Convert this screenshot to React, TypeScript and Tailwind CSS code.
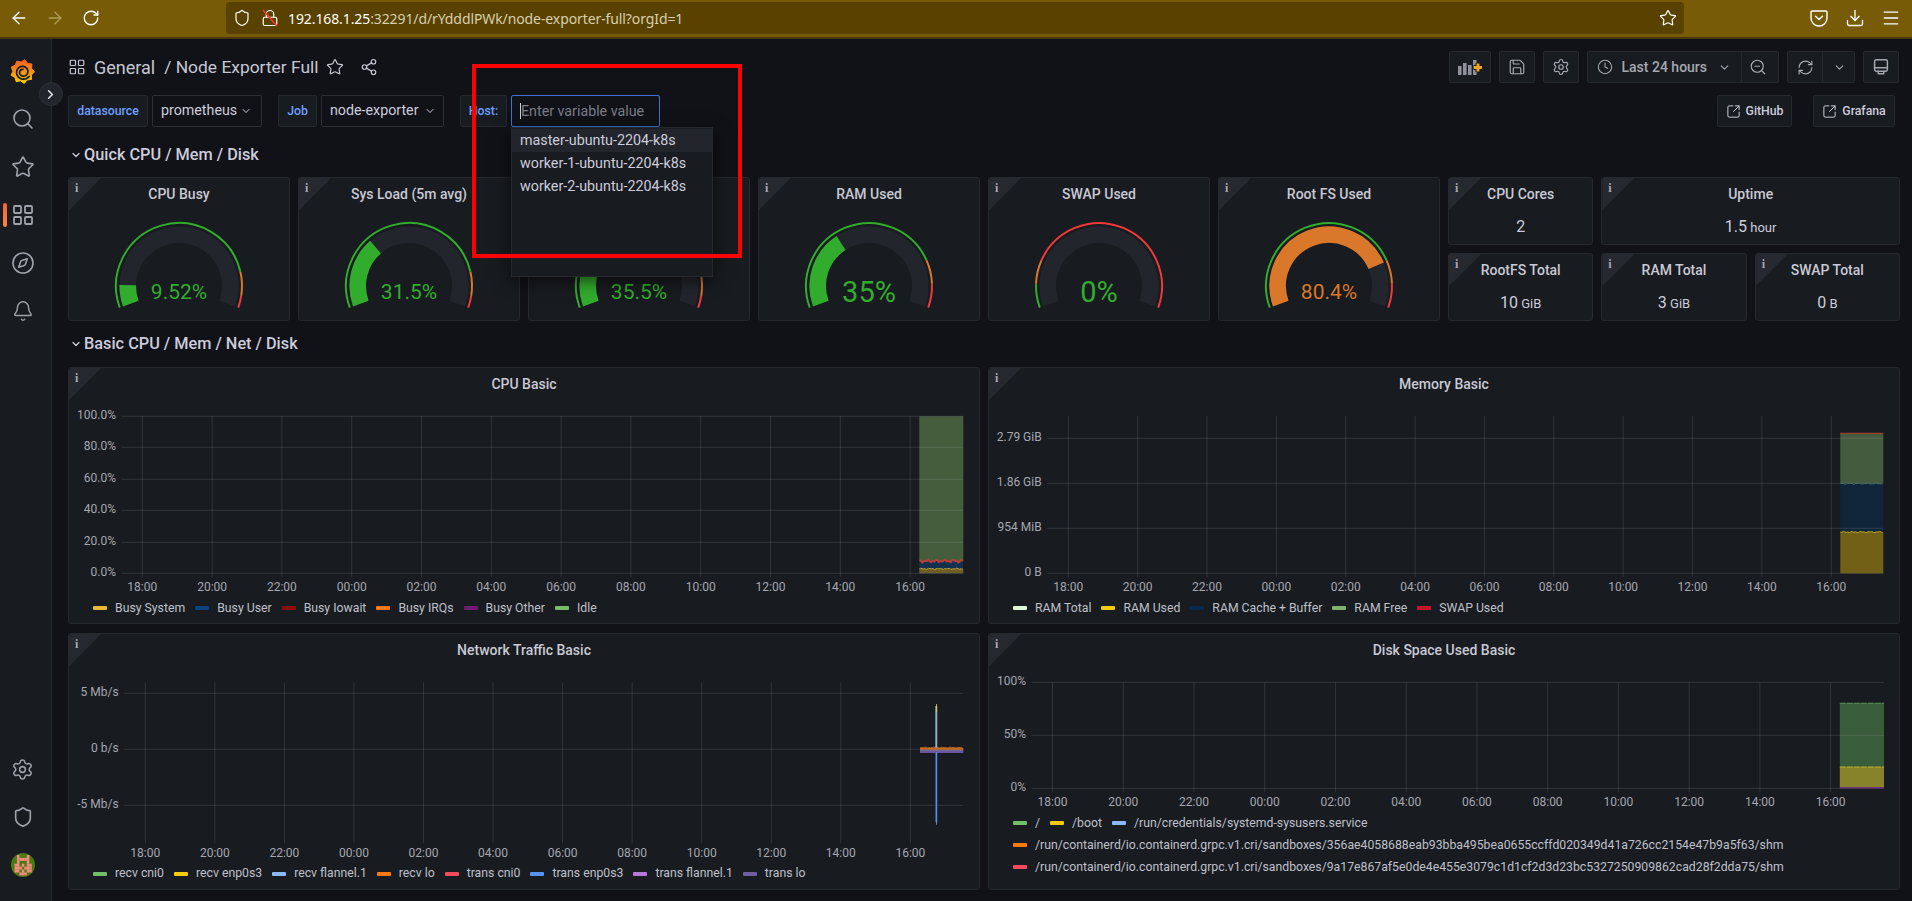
import React from "react";
import {
  ArrowLeft, ArrowRight, RotateCw, Shield, Star, Download, Menu, Search, LayoutGrid, Compass, Bell, Settings,
  ChevronRight, ChevronDown, Share2, Save, Clock, ZoomOut, RefreshCw, SquareArrowOutUpRight, Lock,
} from "lucide-react";

const GREEN = "#32ac2d";
const ORANGE = "#d9772a";
const RED = "#f03a3a";

function GrafanaLogo() {
  const pts: string[] = [];
  const n = 9;
  for (let i = 0; i < n * 2; i++) {
    const a = (i / (n * 2)) * Math.PI * 2 - Math.PI / 2 + 0.2;
    const r = i % 2 === 0 ? 12 : 9.6;
    pts.push(`${(12.5 + r * Math.cos(a)).toFixed(1)},${(12.5 + r * Math.sin(a)).toFixed(1)}`);
  }
  const spiral: string[] = [];
  for (let i = 0; i <= 60; i++) {
    const t = i / 60;
    const a = 0.6 + t * Math.PI * 3.3;
    const r = 7.6 - t * 5;
    spiral.push(`${(13 + r * Math.cos(a)).toFixed(2)},${(13 + r * Math.sin(a)).toFixed(2)}`);
  }
  return (
    <svg width="25" height="25" viewBox="0 0 25 25">
      <defs>
        <linearGradient id="gf" x1="0" y1="0" x2="0" y2="1">
          <stop offset="0" stopColor="#f05a28" />
          <stop offset="1" stopColor="#fbca0a" />
        </linearGradient>
      </defs>
      <polygon points={pts.join(" ")} fill="url(#gf)" strokeLinejoin="round" stroke="url(#gf)" strokeWidth="1" />
      <polyline points={spiral.join(" ")} fill="none" stroke="#181b1f" strokeWidth="1.700" strokeLinecap="round" />
    </svg>
  );
}

function Avatar() {
  const pink = "#f58b80";
  const rows = [".x...x.", ".xxxxx.", ".x...x.", "xx.x.xx", "xxx.xxx", "xx.x.xx", "..xxx.."];
  return (
    <svg width="24" height="24" viewBox="0 0 24 24">
      <circle cx="12" cy="12" r="12" fill="#4a7a12" />
      {rows.flatMap((r, y) =>
        r.split("").map((c, x) => (c === "x" ? <rect key={`${x}-${y}`} x={3.5 + x * 2.45} y={2 + y * 2.9} width="2.500" height="3" fill={pink} /> : null)),
      )}
    </svg>
  );
}

function Pocket() {
  return (
    <svg width="20" height="20" viewBox="0 0 20 20" fill="none" stroke="#fff" strokeWidth="1.400" strokeLinecap="round" strokeLinejoin="round">
      <path d="M3.200 3h13.600c.7 0 1.200.5 1.200 1.200V10a8 8 0 0 1-16 0V4.200C2 3.500 2.500 3 3.200 3Z" />
      <path d="M6.500 8.200 10 11.500l3.500-3.300" />
    </svg>
  );
}

function AddPanel() {
  return (
    <svg width="26" height="20" viewBox="0 0 26 20">
      <rect x="1" y="9" width="3.600" height="9" fill="#8e8f98" />
      <rect x="6" y="6" width="3.600" height="12" fill="#8e8f98" />
      <rect x="11" y="8" width="3.600" height="10" fill="#8e8f98" />
      <rect x="16" y="3" width="3.600" height="15" fill="#8e8f98" />
      <path d="M16.500 10.500h9M21 6v9" stroke="#181b1f" strokeWidth="5" />
      <path d="M17 10.500h8M21 6.500v8" stroke="#f5a623" strokeWidth="2.800" />
    </svg>
  );
}

function KioskIcon() {
  return (
    <svg width="18" height="18" viewBox="0 0 18 18" fill="none" stroke="currentColor" strokeWidth="1.500" strokeLinejoin="round" strokeLinecap="round">
      <path d="M4.200 1.800h9.600c.9 0 1.600.7 1.600 1.600v8.200c0 .9-.7 1.600-1.600 1.600H4.200c-.9 0-1.600-.7-1.600-1.600V3.400c0-.9.700-1.600 1.600-1.600Z" />
      <path d="M2.600 9.800h12.800" />
      <path d="M6.200 13.200v2.600h5.600v-2.600" />
    </svg>
  );
}

function InfoCorner() {
  return (
    <div className="absolute left-0 top-0 w-8 h-8 [clip-path:polygon(0_0,100%_0,0_100%)] bg-[#262a30] rounded-tl-[2px]">
      <span className="absolute left-[6px] top-[2px] text-[12px] leading-[16px] font-bold text-[#a6a8b3] [font-family:'Liberation_Serif',serif]">i</span>
    </div>
  );
}

function polar(r: number, f: number) {
  const a = ((200 - 220 * f) * Math.PI) / 180;
  return [r * Math.cos(a), -r * Math.sin(a)];
}
function arc(r: number, f0: number, f1: number) {
  const [x0, y0] = polar(r, f0);
  const [x1, y1] = polar(r, f1);
  const large = (f1 - f0) * 220 > 180 ? 1 : 0;
  return `M${x0.toFixed(2)} ${y0.toFixed(2)}A${r} ${r} 0 ${large} 1 ${x1.toFixed(2)} ${y1.toFixed(2)}`;
}

function Gauge({ title, value, text, t1, t2, color, size }: { title: string; value: number; text: string; t1: number; t2: number; color: string; size: number }) {
  const baseline = size > 25 ? 16 : 13;
  return (
    <div className="col-span-3 row-span-2 relative rounded-[3px] bg-[#181b1f] border border-[#25282d] flex flex-col overflow-hidden">
      <InfoCorner />
      <div className="h-[32px] shrink-0 pt-[6px] text-center text-[14px] font-medium text-[#c8c9d4] leading-[20px]">{title}</div>
      <div className="flex-1 flex justify-center">
        <svg width="220" height="109" viewBox="-110 -76 220 109">
          <path d={arc(51.3, 0, 1)} fill="none" stroke="#22252b" strokeWidth="16.6" />
          {value > 0 && <path d={arc(51.3, 0, value)} fill="none" stroke={color} strokeWidth="16.6" />}
          <path d={arc(63, 0, t1)} fill="none" stroke={GREEN} strokeWidth="2" />
          <path d={arc(63, t1, t2)} fill="none" stroke={ORANGE} strokeWidth="2" />
          <path d={arc(63, t2, 1)} fill="none" stroke={RED} strokeWidth="2" />
          <text x="0" y={baseline} textAnchor="middle" fontSize={size} fill={color}>{text}</text>
        </svg>
      </div>
    </div>
  );
}

function StatPanel({ title, value, unit, span }: { title: string; value: string; unit: string; span: string }) {
  return (
    <div className={`${span} relative rounded-[3px] bg-[#181b1f] border border-[#25282d] flex flex-col items-center overflow-hidden`}>
      <InfoCorner />
      <div className="mt-[6px] h-[20px] text-[14px] font-medium leading-[20px] text-[#c8c9d4]">{title}</div>
      <div className="mt-[12px] h-[22px] leading-[22px] text-[#ccccdc] text-[16px] whitespace-pre">
        {value}
        {unit && <span className="text-[13px]"> {unit}</span>}
      </div>
    </div>
  );
}

type LegendItem = [string, string];
const TL = ["18:00", "20:00", "22:00", "00:00", "02:00", "04:00", "06:00", "08:00", "10:00", "12:00", "14:00", "16:00"];

function Grid({ x0, step, hl, x1, hs, vTop, vBot, labels, labelRight, xLabelY }: {
  x0: number; step: number; hl: number; x1: number; hs: number[]; vTop: number; vBot: number; labels: string[]; labelRight: number; xLabelY: number;
}) {
  const stroke = "rgba(204,204,220,0.14)";
  const axis = "#a5a7b1";
  return (
    <g fontSize="12">
      {hs.map((y, i) => (
        <React.Fragment key={i}>
          <line x1={hl} x2={x1} y1={y} y2={y} stroke={stroke} />
          <text x={labelRight} y={y + 2.3} textAnchor="end" fill={axis}>{labels[i]}</text>
        </React.Fragment>
      ))}
      {TL.map((t, i) => (
        <React.Fragment key={t}>
          <line x1={x0 + i * step} x2={x0 + i * step} y1={vTop} y2={vBot} stroke={stroke} />
          <text x={x0 + i * step} y={xLabelY} textAnchor="middle" fill={axis}>{t}</text>
        </React.Fragment>
      ))}
    </g>
  );
}

function noiseLine(x0: number, x1: number, y: number, amp: number, seed: number) {
  const p: string[] = [];
  for (let x = x0, i = 0; x <= x1 + 0.01; x += 1.5, i++) {
    const v = Math.sin(i * 1.7 + seed) * Math.cos(i * 0.63 + seed * 2) * amp;
    p.push(`${x.toFixed(1)},${(y + v).toFixed(2)}`);
  }
  return p.join(" ");
}

function ChartPanel({ title, x, y, svgH, legend, children }: { title: string; x: number; y: number; svgH: number; legend: LegendItem[]; children: React.ReactNode }) {
  return (
    <div className="relative h-[257px] rounded-[3px] bg-[#181b1f] border border-[#25282d] flex flex-col overflow-hidden">
      <InfoCorner />
      <div className="h-[33px] shrink-0 pt-[6px] text-center text-[14px] font-medium leading-[20px] text-[#c8c9d4]">{title}</div>
      <svg width="910" height={svgH} viewBox={`${x + 1} ${y + 34} 910 ${svgH}`} className="shrink-0">{children}</svg>
      <div className="flex flex-wrap pl-[24px] pr-4">
        {legend.map(([name, c]) => (
          <div key={name} className="flex items-center h-[22px] mr-[10px] text-[12.250px] text-[#bfc0cb] whitespace-nowrap">
            <span className="w-[14px] h-[4px] rounded-[1px] mr-[8px]" style={{ background: c }} />
            {name}
          </div>
        ))}
      </div>
    </div>
  );
}

function Btn({ className, children }: { className: string; children: React.ReactNode }) {
  return <div className={`h-8 rounded-[2px] bg-[#181b1f] border border-[#25282d] flex items-center justify-center text-[#a5a7b1] ${className}`}>{children}</div>;
}

function SideIcon({ children, active }: { children: React.ReactNode; active?: boolean }) {
  return (
    <div className="relative h-12 w-full flex items-center justify-center text-[#9fa1ab]">
      {active && <span className="absolute left-[3px] top-3 h-6 w-[3.500px] rounded-[2px] bg-gradient-to-b from-[#f55f3e] to-[#ff8833]" />}
      {children}
    </div>
  );
}

function RowHeader({ children }: { children: React.ReactNode }) {
  return (
    <div className="h-8 flex items-center pl-[2px] text-[16.300px] font-medium text-[#ccccdc]">
      <ChevronDown size={12} strokeWidth={2.5} className="mr-[2px]" />
      {children}
    </div>
  );
}

export default function App() {
  return (
    <div className="relative w-[1912px] h-[901px] overflow-hidden flex flex-col bg-[#111217] [font-family:Roboto,sans-serif]">
      {/* browser toolbar */}
      <div className="h-[39px] shrink-0 pb-[1px] flex items-center pl-[9px] bg-[#785b07] border-b-2 border-[#4a3906] text-white">
        <ArrowLeft size={20} strokeWidth={1.6} />
        <ArrowRight size={20} strokeWidth={1.6} className="ml-[16px] text-[#ae9a58]" />
        <RotateCw size={18} strokeWidth={1.8} className="ml-[17px]" />
        <div className="ml-[126px] w-[1458px] h-[32px] rounded-[4px] bg-[#594100] flex items-center pl-[7px] pr-[7px]">
          <Shield size={18} strokeWidth={1.6} />
          <span className="relative ml-[10px] flex">
            <Lock size={18} strokeWidth={1.6} />
            <svg className="absolute left-0 top-0" width="18" height="18" viewBox="0 0 18 18"><path d="M2 1l14 16" stroke="#ff3030" strokeWidth="1.6" /></svg>
          </span>
          <span className="ml-[9px] text-[14px] tracking-[-0.1px] text-[#d8cfae] [font-family:'Noto_Sans',sans-serif] whitespace-nowrap">
            <span className="text-white">192.168.1.25</span>:32291/d/rYdddlPWk/node-exporter-full?orgId=1
          </span>
          <Star size={18} strokeWidth={1.6} className="ml-auto" />
        </div>
        <span className="ml-[125px]"><Pocket /></span>
        <Download size={20} strokeWidth={1.6} className="ml-[16px]" />
        <Menu size={20} strokeWidth={1.6} className="ml-[16px]" />
      </div>

      <div className="flex-1 flex min-h-0 relative">
        {/* sidebar */}
        <aside className="w-[52px] shrink-0 bg-[#181b1f] border-r border-[#25282d] flex flex-col pt-2 pb-3 pr-[6px]">
          <SideIcon><GrafanaLogo /></SideIcon>
          <SideIcon><Search size={24} strokeWidth={1.6} /></SideIcon>
          <SideIcon><Star size={24} strokeWidth={1.6} /></SideIcon>
          <SideIcon active><LayoutGrid size={24} strokeWidth={1.8} /></SideIcon>
          <SideIcon><Compass size={24} strokeWidth={1.6} /></SideIcon>
          <SideIcon><Bell size={22} strokeWidth={1.6} /></SideIcon>
          <div className="flex-1" />
          <SideIcon><Settings size={23} strokeWidth={1.6} /></SideIcon>
          <SideIcon><Shield size={22} strokeWidth={1.8} /></SideIcon>
          <SideIcon><Avatar /></SideIcon>
        </aside>

        {/* expand */}
        <div className="absolute left-[38.500px] top-[43px] w-6 h-6 rounded-full bg-[#22252b] border border-[#2c3035] flex items-center justify-center text-[#e0e0e8] z-10">
          <ChevronRight size={15} strokeWidth={2.6} />
        </div>

        {/* main */}
        <main className="flex-1 min-w-0 pl-4 pr-3 pt-3 relative">
          <div className="h-8 flex items-center text-[#c6c7d3] text-[18px]">
            <LayoutGrid size={18} strokeWidth={1.6} className="ml-0" />
            <span className="ml-[8px]">General</span>
            <span className="ml-[9px] text-[17.400px]">/ Node Exporter Full</span>
            <Star size={18} strokeWidth={1.6} className="ml-[8px]" />
            <Share2 size={18} strokeWidth={1.6} className="ml-4" />
            <div className="ml-auto mr-[1.500px] flex gap-2">
              <Btn className="w-[42px]"><AddPanel /></Btn>
              <Btn className="w-9"><Save size={18} strokeWidth={1.6} /></Btn>
              <Btn className="w-9"><Settings size={18} strokeWidth={1.6} /></Btn>
              <Btn className="w-[192px] text-[14px] font-medium justify-start">
                <Clock size={16} strokeWidth={1.6} className="ml-[9px]" />
                <span className="ml-[9px]">Last 24 hours</span>
                <ChevronDown size={13} strokeWidth={2} className="ml-[11px]" />
                <span className="ml-[10px] h-full w-px bg-[#25282d]" />
                <ZoomOut size={18} strokeWidth={1.6} className="ml-[7px]" />
              </Btn>
              <Btn className="w-[68px] justify-start">
                <RefreshCw size={17} strokeWidth={1.6} className="ml-[9px]" />
                <span className="ml-[8px] h-full w-px bg-[#25282d]" />
                <ChevronDown size={13} strokeWidth={2} className="ml-[10px]" />
              </Btn>
              <Btn className="w-9"><KioskIcon /></Btn>
            </div>
          </div>

          <div className="mt-3 h-8 flex items-stretch text-[14.250px]">
            <div className="w-20 rounded-[2px] bg-[#181b1f] border border-[#25282d] flex items-center justify-center text-[12.250px] font-medium text-[#6e9fff]">datasource</div>
            <div className="ml-1 w-[110px] rounded-[2px] border border-[#2c3035] flex items-center pl-2 text-[#ccccdc]">prometheus<ChevronDown size={12} strokeWidth={2} className="ml-[3px]" /></div>
            <div className="ml-4 w-[39px] rounded-[2px] bg-[#181b1f] border border-[#25282d] flex items-center justify-center text-[12.250px] font-medium text-[#6e9fff]">Job</div>
            <div className="ml-1 w-[123px] rounded-[2px] border border-[#2c3035] flex items-center pl-2 text-[#ccccdc]">node-exporter<ChevronDown size={12} strokeWidth={2} className="ml-[5px]" /></div>
            <div className="ml-4 w-[47px] rounded-[2px] bg-[#181b1f] border border-[#25282d] flex items-center justify-center text-[12.250px] font-medium text-[#6e9fff]">Host:</div>
            <div className="relative ml-1 w-[149px] rounded-[2px] border border-[#3d71d9] bg-[#111217] flex items-center pl-2 text-[#7b7d87] z-20">
              <span className="border-l border-[#ccccdc] leading-[16px]">Enter variable value</span>
              <div className="absolute left-[-1px] top-[31px] w-[202px] h-[150px] bg-[#181b1f] border border-[#25282d] shadow-[0_4px_16px_rgba(0,0,0,0.6)] pt-[1px] text-[14.300px] text-[#ccccdc]">
                <div className="h-[23px] pl-2 flex items-center bg-[#22252b]">master-ubuntu-2204-k8s</div>
                <div className="h-[23px] pl-2 flex items-center">worker-1-ubuntu-2204-k8s</div>
                <div className="h-[23px] pl-2 flex items-center">worker-2-ubuntu-2204-k8s</div>
              </div>
            </div>
            <div className="ml-auto mr-[5px] flex gap-[21px]">
              <Btn className="w-[75px] text-[12.250px] font-medium text-[#ccccdc] pt-[1px]"><SquareArrowOutUpRight size={15} strokeWidth={1.6} className="mr-[5px]" />GitHub</Btn>
              <Btn className="w-[82px] text-[12.250px] font-medium text-[#ccccdc] pt-[1px]"><SquareArrowOutUpRight size={15} strokeWidth={1.6} className="mr-[5px]" />Grafana</Btn>
            </div>
          </div>

          <div className="mt-[12px]"><RowHeader>Quick CPU / Mem / Disk</RowHeader></div>

          <div className="mt-[6px] grid grid-cols-[repeat(24,minmax(0,1fr))] grid-rows-[67.500px_67.500px] gap-x-2 gap-y-[8.500px]">
            <Gauge title="CPU Busy" value={0.0952} text="9.52%" t1={0.85} t2={0.95} color={GREEN} size={21} />
            <Gauge title="Sys Load (5m avg)" value={0.315} text="31.5%" t1={0.85} t2={0.95} color={GREEN} size={21} />
            <Gauge title="" value={0.355} text="35.5%" t1={0.85} t2={0.95} color={GREEN} size={21} />
            <Gauge title="RAM Used" value={0.35} text="35%" t1={0.8} t2={0.9} color={GREEN} size={29} />
            <Gauge title="SWAP Used" value={0} text="0%" t1={0.1} t2={0.2} color={GREEN} size={29} />
            <Gauge title="Root FS Used" value={0.804} text="80.4%" t1={0.8} t2={0.9} color={ORANGE} size={21} />
            <StatPanel span="col-span-2" title="CPU Cores" value="2" unit="" />
            <StatPanel span="col-span-4" title="Uptime" value="1.5" unit="hour" />
            <StatPanel span="col-span-2" title="RootFS Total" value="10" unit="GiB" />
            <StatPanel span="col-span-2" title="RAM Total" value="3" unit="GiB" />
            <StatPanel span="col-span-2" title="SWAP Total" value="0" unit="B" />
          </div>

          <div className="mt-[7.500px]"><RowHeader>Basic CPU / Mem / Net / Disk</RowHeader></div>

          <div className="mt-[7px] grid grid-cols-2 gap-x-2 gap-y-[9px]">
            <ChartPanel title="CPU Basic" x={68} y={367} svgH={196} legend={[["Busy System", "#eab839"], ["Busy User", "#0a437c"], ["Busy Iowait", "#890f02"], ["Busy IRQs", "#ff780a"], ["Busy Other", "#711a73"], ["Idle", "#73bf69"]]}>
              <rect x="919.300" y="416.300" width="44" height="145" fill="#455c3d" />
              <polygon points={`919.300,573.300 ${noiseLine(919.3, 963.3, 561, 1.6, 1)} 963.300,573.300`} fill="#12304f" />
              <polyline points={noiseLine(919.3, 963.3, 561, 1.6, 1)} fill="none" stroke="#b5403a" strokeWidth="2" />
              <rect x="919.300" y="569" width="44" height="4.300" fill="#6d5b22" />
              <polyline points={noiseLine(919.3, 963.3, 568.8, 0.7, 3)} fill="none" stroke="#c9a332" strokeWidth="1" />
              <Grid x0={142.3} step={69.8} hl={121.7} x1={963.3} hs={[416.3, 447.3, 479.3, 510.3, 542.3, 573.3]} vTop={416.3} vBot={577} labels={["100.0%", "80.0%", "60.0%", "40.0%", "20.0%", "0.0%"]} labelRight={116} xLabelY={591} />
            </ChartPanel>

            <ChartPanel title="Memory Basic" x={988} y={367} svgH={196} legend={[["RAM Total", "#e0f9d7"], ["RAM Used", "#f2cc0c"], ["RAM Cache + Buffer", "#052b51"], ["RAM Free", "#7eb26d"], ["SWAP Used", "#c4162a"]]}>
              <rect x="1840.300" y="433.500" width="43" height="50" fill="#455b3d" />
              <rect x="1840.300" y="483.300" width="43" height="49" fill="#10253a" />
              <rect x="1840.300" y="532" width="43" height="41.300" fill="#726016" />
              <line x1="1840.300" x2="1883.300" y1="433.300" y2="433.300" stroke="#b5472f" />
              <polyline points={noiseLine(1840.3, 1883.3, 483.6, 0.8, 2)} fill="none" stroke="#3f6d5a" />
              <polyline points={noiseLine(1840.3, 1883.3, 532, 0.8, 4)} fill="none" stroke="#c9a91c" />
              <Grid x0={1068.3} step={69.36} hl={1047.3} x1={1883.3} hs={[438.3, 483.3, 528.3, 573.3]} vTop={416} vBot={577} labels={["2.79 GiB", "1.86 GiB", "954 MiB", "0 B"]} labelRight={1041.7} xLabelY={591} />
            </ChartPanel>

            <ChartPanel title="Network Traffic Basic" x={68} y={633} svgH={195.5} legend={[["recv cni0", "#73bf69"], ["recv enp0s3", "#f2cc0c"], ["recv flannel.1", "#8ab8ff"], ["recv lo", "#ff780a"], ["trans cni0", "#f2495c"], ["trans enp0s3", "#5794f2"], ["trans flannel.1", "#b877d9"], ["trans lo", "#705da0"]]}>
              <Grid x0={145.3} step={69.55} hl={124.3} x1={963.3} hs={[693.3, 749.3, 805.3]} vTop={682.3} vBot={843.3} labels={["5 Mb/s", "0 b/s", "-5 Mb/s"]} labelRight={118.7} xLabelY={857} />
              <rect x="920" y="747.800" width="43.300" height="2" fill="#c96a1e" />
              <rect x="920" y="749.800" width="43.300" height="1" fill="#8b8aa0" />
              <rect x="920" y="750.800" width="43.300" height="2.200" fill="#6a55a5" />
              <polyline points={noiseLine(920, 963.3, 747.6, 0.6, 5)} fill="none" stroke="#d0731f" strokeWidth="0.800" />
              <rect x="935.300" y="706" width="2" height="42" fill="#8fb0bd" />
              <rect x="936" y="704" width="0.800" height="8" fill="#f2cc0c" />
              <rect x="935.300" y="752" width="2" height="70" fill="#3f6cb5" />
              <rect x="936" y="752" width="0.900" height="72.700" fill="#5794f2" />
            </ChartPanel>

            <ChartPanel title="Disk Space Used Basic" x={988} y={633} svgH={145} legend={[["/", "#73bf69"], ["/boot", "#f2cc0c"], ["/run/credentials/systemd-sysusers.service", "#8ab8ff"], ["/run/containerd/io.containerd.grpc.v1.cri/sandboxes/356ae4058688eab93bba495bea0655ccffd020349d41a726cc2154e47b9a5f63/shm", "#ff780a"], ["/run/containerd/io.containerd.grpc.v1.cri/sandboxes/9a17e867af5e0de4e455e3079c1d1cf2d3d23bc5327250909862cad28f2dda75/shm", "#f2495c"]]}>
              <rect x="1839.800" y="703" width="44.200" height="64" fill="#395c3b" />
              <rect x="1839.800" y="767" width="44.200" height="20" fill="#87832a" />
              <rect x="1839.800" y="787" width="44.200" height="1.500" fill="#6a2f7a" />
              <line x1="1839.800" x2="1884" y1="703.200" y2="703.200" stroke="#5d9358" strokeDasharray="6 1" />
              <line x1="1839.800" x2="1884" y1="767" y2="767" stroke="#c4ae22" strokeDasharray="6 1" />
              <Grid x0={1052.5} step={70.74} hl={1031.4} x1={1884} hs={[682.3, 735.3, 788.3]} vTop={682.3} vBot={791.7} labels={["100%", "50%", "0%"]} labelRight={1026} xLabelY={806} />
            </ChartPanel>
          </div>

          {/* annotation */}
          <div className="absolute left-[420px] top-[25px] w-[270px] h-[194px] border-4 border-[#ff0000] z-30 pointer-events-none" />
        </main>
      </div>
    </div>
  );
}
